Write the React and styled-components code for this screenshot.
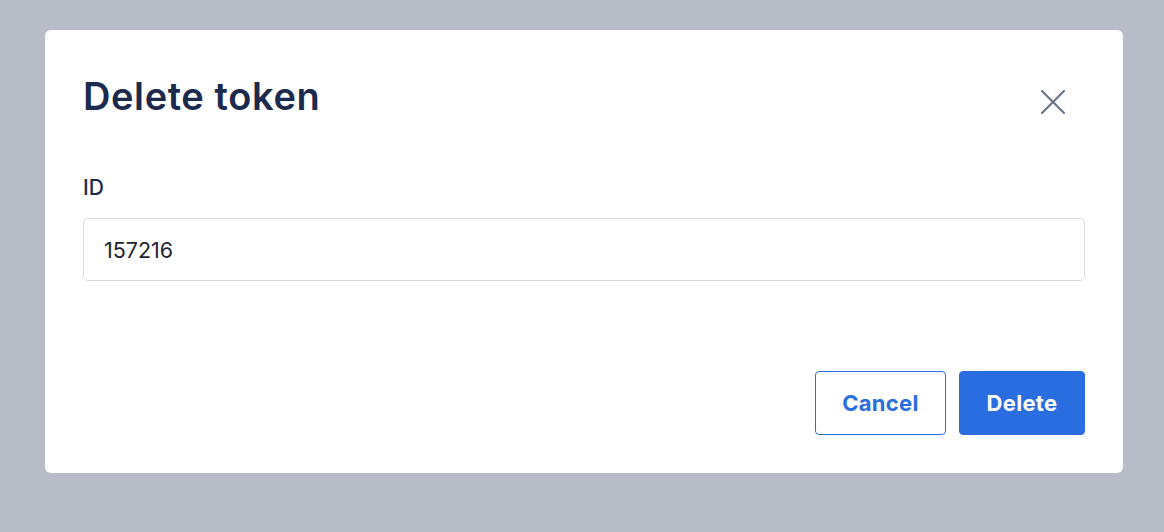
import React from "react";
import styled, { createGlobalStyle } from "styled-components";

const GlobalStyle = createGlobalStyle`
    * {
        box-sizing: border-box;
    }
    body {
        margin: 0;
        font-family: Inter, "Noto Sans", sans-serif;
        background-color: #b8bcc7;
    }
`;

const Backdrop = styled.div`
    min-height: 532px;
    padding: 30px 41px 0 45px;
`;

const Modal = styled.div`
    background-color: #ffffff;
    border-radius: 6px;
    padding: 38px;
    display: flex;
    flex-direction: column;
`;

const Header = styled.div`
    display: flex;
    align-items: center;
    justify-content: space-between;
    margin-bottom: 52px;
`;

const Title = styled.h2`
    margin: 0;
    font-size: 38px;
    line-height: 56px;
    font-weight: 600;
    color: #1b2a4e;
    letter-spacing: 0.6px;
`;

const CloseButton = styled.button`
    border: none;
    background: none;
    padding: 0;
    margin: 12px 18px 0 0;
    width: 28px;
    height: 28px;
    display: flex;
    align-items: center;
    justify-content: center;
    color: #6b7587;
    cursor: pointer;
`;

const Field = styled.div`
    display: flex;
    flex-direction: column;
    gap: 18px;
`;

const Label = styled.label`
    font-size: 21px;
    line-height: 24px;
    font-weight: 500;
    color: #1b2a4e;
`;

const Input = styled.input`
    height: 63px;
    border: 1px solid #d3d8df;
    border-radius: 5px;
    padding: 0 20px;
    font-family: inherit;
    font-size: 21.5px;
    color: #1f2430;
    outline: none;
`;

const Footer = styled.div`
    display: flex;
    justify-content: flex-end;
    gap: 13px;
    margin-top: 90px;
`;

const Button = styled.button`
    height: 64px;
    width: ${props => props.width}px;
    border-radius: 4px;
    border: 1px solid #2a6de0;
    background-color: ${props => (props.primary ? "#2a6de0" : "#ffffff")};
    color: ${props => (props.primary ? "#ffffff" : "#2a6de0")};
    font-family: inherit;
    font-size: 22px;
    font-weight: 700;
    letter-spacing: 0.3px;
    cursor: pointer;
`;

const App = () => {
    return (
        <>
            <GlobalStyle />
            <Backdrop>
                <Modal>
                    <Header>
                        <Title>Delete token</Title>
                        <CloseButton aria-label="Close">
                            <svg width="26" height="26" viewBox="0 0 26 26" fill="none">
                                <path
                                    d="M2 2L24 24M24 2L2 24"
                                    stroke="currentColor"
                                    strokeWidth="2.2"
                                    strokeLinecap="round"
                                />
                            </svg>
                        </CloseButton>
                    </Header>
                    <Field>
                        <Label htmlFor="token-id">ID</Label>
                        <Input id="token-id" defaultValue="157216" />
                    </Field>
                    <Footer>
                        <Button width={131}>Cancel</Button>
                        <Button width={126} primary>
                            Delete
                        </Button>
                    </Footer>
                </Modal>
            </Backdrop>
        </>
    );
};

export default App;
